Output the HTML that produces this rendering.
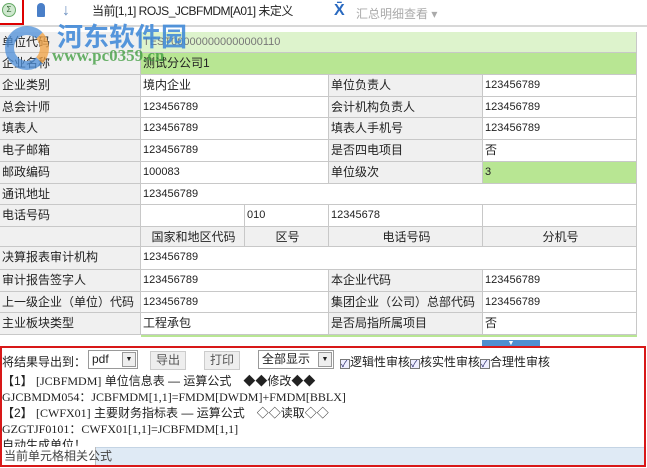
<!DOCTYPE html>
<html><head><meta charset="utf-8"><style>
*{margin:0;padding:0;box-sizing:border-box}
body{width:647px;height:468px;overflow:hidden;background:#fff;font-family:"Liberation Sans","Noto Sans CJK SC",sans-serif;font-size:12px;color:#222;position:relative}
.a{position:absolute;white-space:nowrap}
.c{position:absolute;border-right:1px solid #c8c8c8;border-bottom:1px solid #c8c8c8;padding-left:2px;line-height:21px;white-space:nowrap;overflow:hidden}
.l{background:#f0f0f0;font-size:12px}
.v{background:#fff;font-size:11px}
.h{background:#f0f0f0;font-size:12px;text-align:center}
.bt{position:absolute;top:351px;height:19px;border:1px solid #ccc;background:#eee;font-size:12px;line-height:17px;text-align:center;color:#555}
.cb{display:inline-block;width:10px;height:10px;border:1px solid #777;background:#eef;vertical-align:-1px;font-size:9px;line-height:8px;color:#226}
</style></head><body>
<!-- toolbar -->
<div class="a" style="left:0;top:0;width:647px;height:27px;background:#fff;border-bottom:2px solid #d8d8d8"></div>
<div class="a" style="left:2px;top:3px;width:14px;height:14px;border-radius:50%;background:#cfe8cf;border:1px solid #6a6;font-size:8px;line-height:12px;text-align:center;color:#363">Σ</div>
<div class="a" style="left:22px;top:0;width:2px;height:25px;background:#d00"></div>
<div class="a" style="left:0;top:23px;width:24px;height:2px;background:#d00"></div>
<div class="a" style="left:37px;top:3px;width:8px;height:14px;background:#4a7fc8;border-radius:4px 4px 1px 1px"></div>
<div class="a" style="left:62px;top:2px;color:#6a8fc0;font-size:16px">↓</div>
<div class="a" style="left:88px;top:2px;width:172px;height:19px;background:#fff;font-size:12px;line-height:19px;padding-left:4px;letter-spacing:-0.5px">当前[1,1] ROJS_JCBFMDM[A01] 未定义</div>
<div class="a" style="left:334px;top:2px;color:#2a6ac0;font-size:16px;font-weight:bold">X̄</div>
<div class="a" style="left:356px;top:5px;color:#aaa;font-size:12px">汇总明细查看 ▾</div>
<!-- table -->
<div class="c l" style="left:0;top:32px;width:141px;height:21px">单位代码</div>
<div class="c v" style="left:141px;top:32px;width:496px;height:21px;background:#ddf3cc;color:#777">TEST000000000000000110</div>
<div class="c l" style="left:0;top:53px;width:141px;height:22px">企业名称</div>
<div class="c v" style="left:141px;top:53px;width:496px;height:22px;background:#b8e693;font-size:12px">测试分公司1</div>
<div class="c l" style="left:0;top:75px;width:141px;height:22px">企业类别</div><div class="c v" style="left:141px;top:75px;width:188px;height:22px;font-size:12px">境内企业</div><div class="c l" style="left:329px;top:75px;width:154px;height:22px">单位负责人</div><div class="c v" style="left:483px;top:75px;width:154px;height:22px">123456789</div>
<div class="c l" style="left:0;top:97px;width:141px;height:21px">总会计师</div><div class="c v" style="left:141px;top:97px;width:188px;height:21px">123456789</div><div class="c l" style="left:329px;top:97px;width:154px;height:21px">会计机构负责人</div><div class="c v" style="left:483px;top:97px;width:154px;height:21px">123456789</div>
<div class="c l" style="left:0;top:118px;width:141px;height:22px">填表人</div><div class="c v" style="left:141px;top:118px;width:188px;height:22px">123456789</div><div class="c l" style="left:329px;top:118px;width:154px;height:22px">填表人手机号</div><div class="c v" style="left:483px;top:118px;width:154px;height:22px">123456789</div>
<div class="c l" style="left:0;top:140px;width:141px;height:22px">电子邮箱</div><div class="c v" style="left:141px;top:140px;width:188px;height:22px">123456789</div><div class="c l" style="left:329px;top:140px;width:154px;height:22px">是否四电项目</div><div class="c v" style="left:483px;top:140px;width:154px;height:22px;font-size:12px">否</div>
<div class="c l" style="left:0;top:162px;width:141px;height:22px">邮政编码</div><div class="c v" style="left:141px;top:162px;width:188px;height:22px">100083</div><div class="c l" style="left:329px;top:162px;width:154px;height:22px">单位级次</div><div class="c v" style="left:483px;top:162px;width:154px;height:22px;background:#b8e693">3</div>
<div class="c l" style="left:0;top:184px;width:141px;height:21px">通讯地址</div><div class="c v" style="left:141px;top:184px;width:496px;height:21px">123456789</div>
<div class="c l" style="left:0;top:205px;width:141px;height:22px">电话号码</div><div class="c v" style="left:141px;top:205px;width:104px;height:22px"></div><div class="c v" style="left:245px;top:205px;width:84px;height:22px">010</div><div class="c v" style="left:329px;top:205px;width:154px;height:22px">12345678</div><div class="c v" style="left:483px;top:205px;width:154px;height:22px"></div>
<div class="c l" style="left:0;top:227px;width:141px;height:20px"></div><div class="c h" style="left:141px;top:227px;width:104px;height:20px;line-height:20px">国家和地区代码</div><div class="c h" style="left:245px;top:227px;width:84px;height:20px;line-height:20px">区号</div><div class="c h" style="left:329px;top:227px;width:154px;height:20px;line-height:20px">电话号码</div><div class="c h" style="left:483px;top:227px;width:154px;height:20px;line-height:20px">分机号</div>
<div class="c l" style="left:0;top:247px;width:141px;height:23px">决算报表审计机构</div><div class="c v" style="left:141px;top:247px;width:496px;height:23px">123456789</div>
<div class="c l" style="left:0;top:270px;width:141px;height:22px">审计报告签字人</div><div class="c v" style="left:141px;top:270px;width:188px;height:22px">123456789</div><div class="c l" style="left:329px;top:270px;width:154px;height:22px">本企业代码</div><div class="c v" style="left:483px;top:270px;width:154px;height:22px">123456789</div>
<div class="c l" style="left:0;top:292px;width:141px;height:21px">上一级企业（单位）代码</div><div class="c v" style="left:141px;top:292px;width:188px;height:21px">123456789</div><div class="c l" style="left:329px;top:292px;width:154px;height:21px">集团企业（公司）总部代码</div><div class="c v" style="left:483px;top:292px;width:154px;height:21px">123456789</div>
<div class="c l" style="left:0;top:313px;width:141px;height:22px">主业板块类型</div><div class="c v" style="left:141px;top:313px;width:188px;height:22px;font-size:12px">工程承包</div><div class="c l" style="left:329px;top:313px;width:154px;height:22px">是否局指所属项目</div><div class="c v" style="left:483px;top:313px;width:154px;height:22px;font-size:12px">否</div>
<div class="a" style="left:141px;top:335px;width:496px;height:2px;background:#b8e693"></div>
<div class="a" style="left:482px;top:340px;width:58px;height:7px;background:#4f8fd0;color:#fff;font-size:7px;line-height:7px;text-align:center">▼</div>
<!-- watermark -->
<div class="a" style="left:5px;top:26px;width:44px;height:44px;border-radius:50%;border:9px solid #4c8ed8;border-right-color:#f0a040;opacity:.75"></div>
<div class="a" style="left:57px;top:17px;font-size:26px;font-weight:bold;color:#3a86d8;opacity:.85;font-family:'Noto Sans CJK SC',sans-serif">河东软件园</div>
<div class="a" style="left:52px;top:46px;font-size:17px;font-weight:bold;color:#3a9a3a;opacity:.75;font-family:'Liberation Serif',serif">www.pc0359.cn</div>
<!-- bottom panel -->
<div class="a" style="left:0;top:346px;width:646px;height:121px;border:2px solid #d81818"></div>
<div class="a" style="left:2px;top:353px;font-size:12px">将结果导出到：</div>
<div class="a" style="left:88px;top:350px;width:50px;height:19px;border:1px solid #999;font-size:12px;line-height:17px;padding-left:3px">pdf<span style="position:absolute;right:1px;top:1px;width:14px;height:15px;border:1px solid #999;background:#eee;font-size:7px;line-height:14px;text-align:center">▼</span></div>
<div class="bt" style="left:150px;width:36px">导出</div>
<div class="bt" style="left:204px;width:36px">打印</div>
<div class="a" style="left:258px;top:350px;width:76px;height:19px;border:1px solid #999;font-size:12px;line-height:17px;padding-left:3px">全部显示<span style="position:absolute;right:1px;top:1px;width:14px;height:15px;border:1px solid #999;background:#eee;font-size:7px;line-height:14px;text-align:center">▼</span></div>
<div class="a" style="left:340px;top:353px;font-size:12px"><span class="cb">✓</span>逻辑性审核<span class="cb">✓</span>核实性审核<span class="cb">✓</span>合理性审核</div>
<div class="a" style="left:2px;top:373px;font-size:12px;line-height:16px">【1】 <span style="font-family:'Liberation Serif',serif">[JCBFMDM]</span> 单位信息表 — 运算公式　◆◆修改◆◆<br><span style="font-family:'Liberation Serif',serif">GJCBMDM054：JCBFMDM[1,1]=FMDM[DWDM]+FMDM[BBLX]</span><br>【2】 <span style="font-family:'Liberation Serif',serif">[CWFX01]</span> 主要财务指标表 — 运算公式　◇◇读取◇◇<br><span style="font-family:'Liberation Serif',serif">GZGTJF0101：CWFX01[1,1]=JCBFMDM[1,1]</span><br>自动生成单位！</div>
<div class="a" style="left:2px;top:447px;width:642px;height:18px;background:#dfeaf5;border-top:1px solid #c4d4e4"></div>
<div class="a" style="left:2px;top:447px;width:94px;height:18px;background:#fff;border-right:1px solid #bbb;font-size:12px;line-height:18px;padding-left:2px;color:#444">当前单元格相关公式</div>
</body></html>
